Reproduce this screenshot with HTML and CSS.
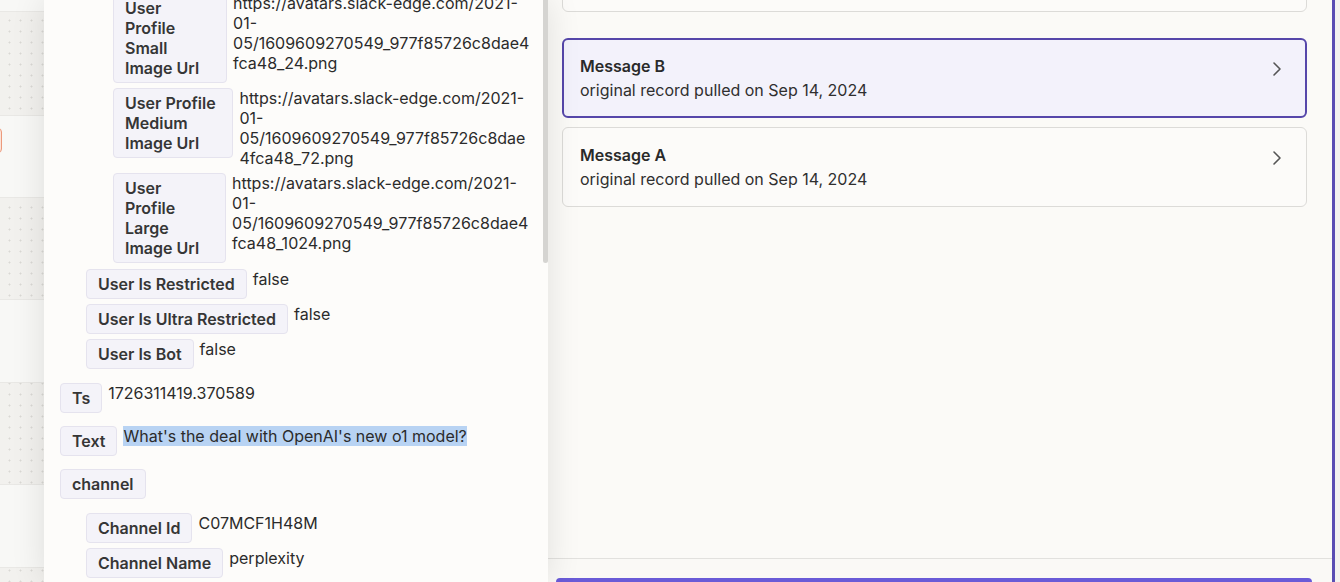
FILE: index.html
```html
<!DOCTYPE html>
<html lang="en">
<head>
<meta charset="utf-8">
<title>Record detail</title>
<link rel="stylesheet" href="styles.css">
</head>
<body>
<div class="app">
  <div class="canvas">
    <div class="node n1"></div>
    <div class="node n2"><span class="pill"></span></div>
    <div class="node n3"></div>
    <div class="node n4"></div>
  </div>

  <div class="panel">
    <div class="scroll">
      <div class="tree">
        <div class="item first">
          <div class="sub">
            <div class="item">
              <div class="sub deep">
                <div class="row"><div class="key">User Profile Small Image Url</div><div class="val">https://avatars.slack-edge.com/2021-01-05/1609609270549_977f85726c8dae4fca48_24.png</div></div>
                <div class="row"><div class="key">User Profile Medium Image Url</div><div class="val">https://avatars.slack-edge.com/2021-01-05/1609609270549_977f85726c8dae4fca48_72.png</div></div>
                <div class="row"><div class="key">User Profile Large Image Url</div><div class="val">https://avatars.slack-edge.com/2021-01-05/1609609270549_977f85726c8dae4fca48_1024.png</div></div>
              </div>
            </div>
            <div class="row"><div class="key">User Is Restricted</div><div class="val">false</div></div>
            <div class="row"><div class="key">User Is Ultra Restricted</div><div class="val">false</div></div>
            <div class="row"><div class="key">User Is Bot</div><div class="val">false</div></div>
          </div>
        </div>
        <div class="row"><div class="key">Ts</div><div class="val">1726311419.370589</div></div>
        <div class="row"><div class="key">Text</div><div class="val"><span class="sel">What's the deal with OpenAI's new o1 model?</span></div></div>
        <div class="item">
          <div class="row"><div class="key">channel</div></div>
          <div class="sub open">
            <div class="row"><div class="key">Channel Id</div><div class="val">C07MCF1H48M</div></div>
            <div class="row"><div class="key">Channel Name</div><div class="val">perplexity</div></div>
          </div>
        </div>
      </div>
    </div>
    <div class="thumb"></div>
  </div>

  <div class="right">
    <div class="list">
      <div class="card top"></div>
      <div class="card selected">
        <div class="card-text">
          <div class="card-title">Message B</div>
          <div class="card-sub">original record pulled on Sep 14, 2024</div>
        </div>
        <svg class="chev" viewBox="0 0 24 24" width="24" height="24"><path d="M9 6l6 6-6 6" fill="none" stroke="#555" stroke-width="1.6" stroke-linecap="round" stroke-linejoin="round"/></svg>
      </div>
      <div class="card">
        <div class="card-text">
          <div class="card-title">Message A</div>
          <div class="card-sub">original record pulled on Sep 14, 2024</div>
        </div>
        <svg class="chev" viewBox="0 0 24 24" width="24" height="24"><path d="M9 6l6 6-6 6" fill="none" stroke="#555" stroke-width="1.6" stroke-linecap="round" stroke-linejoin="round"/></svg>
      </div>
    </div>
    <div class="footer"><div class="btn"></div></div>
  </div>

  <div class="edge"></div>
</div>
</body>
</html>
```

FILE: styles.css
```css
* { box-sizing: border-box; }
html, body { margin: 0; padding: 0; height: 100%; }
body {
  font-family: Inter, "Noto Sans", "Liberation Sans", sans-serif;
  font-size: 16px;
  color: #2a2a2a;
  background: #f3f2ef;
  overflow: hidden;
}
.app {
  display: flex;
  width: 1340px;
  height: 582px;
  overflow: hidden;
}

/* canvas strip on the far left */
.canvas {
  position: relative;
  flex: 0 0 44px;
  height: 100%;
  background-color: #f2f1ee;
  background-image: radial-gradient(circle, #d9d8d4 0.8px, transparent 1.2px);
  background-size: 11px 11px;
  background-position: 4px 4px;
}
.node {
  position: absolute;
  left: -20px;
  width: 100px;
  background: #f8f8f6;
  border-top: 1px solid #e9e8e5;
  border-bottom: 1px solid #e9e8e5;
}
.n1 { top: -60px; height: 72px; }
.n2 { top: 115px; height: 83px; }
.n3 { top: 299px; height: 84px; }
.n4 { top: 484px; height: 84px; }
.pill {
  position: absolute;
  left: 10px;
  top: 12px;
  width: 12px;
  height: 25px;
  border: 1px solid #ec9a7c;
  background: #fbe3d8;
  border-radius: 4px;
}

/* detail panel */
.panel {
  position: relative;
  z-index: 2;
  flex: 0 0 504px;
  height: 100%;
  background: #fdfcfa;
  box-shadow: 0 0 32px rgba(0, 0, 0, 0.11);
  overflow: hidden;
}
.scroll {
  padding: 0 18px 0 16px;
  margin-top: -7px;
}
.thumb {
  position: absolute;
  right: 0;
  top: 0;
  width: 5px;
  height: 263px;
  background: #d5d4d1;
  border-radius: 0 0 3px 3px;
}
.tree {
  display: flex;
  flex-direction: column;
  gap: 13px;
}
.item {
  display: flex;
  flex-direction: column;
}
.item.first { margin-bottom: 1px; }
.sub {
  display: flex;
  flex-direction: column;
  gap: 5px;
  margin-left: 26px;
}
.sub.deep { margin-left: 27px; margin-bottom: 1px; }
.sub.open { margin-top: 14px; }
.row {
  display: flex;
  align-items: flex-start;
  gap: 6px;
}
.key {
  flex: 0 1 auto;
  padding: 4px 11px;
  line-height: 20px;
  font-weight: 600;
  color: #363636;
  background: #f4f3f9;
  border: 1px solid #e5e3ee;
  border-radius: 4px;
}
.val {
  flex: 0 1 auto;
  line-height: 20px;
  color: #2b2b2b;
  overflow-wrap: anywhere;
  min-width: 0;
}
.sel { background: #b8d3f3; }

/* right list panel */
.right {
  position: relative;
  z-index: 1;
  flex: 0 0 784px;
  height: 100%;
  display: flex;
  flex-direction: column;
  background: #fbfaf7;
}
.list {
  flex: 1 1 auto;
  padding: 0 25px 0 14px;
  display: flex;
  flex-direction: column;
  gap: 9px;
  overflow: hidden;
}
.card {
  flex: 0 0 auto;
  display: flex;
  align-items: flex-start;
  justify-content: space-between;
  padding: 15px 17px;
  border: 1px solid #dcdbd8;
  border-radius: 6px;
  background: #fcfbf9;
}
.card.top {
  height: 80px;
  margin-top: -68px;
  margin-bottom: 17px;
}
.card.selected {
  padding: 14px 16px;
  border: 2px solid #5647aa;
  background: #f3f2fb;
}
.card-title {
  font-weight: 600;
  line-height: 24px;
  color: #2a2a2a;
}
.card-sub {
  line-height: 24px;
  color: #2f2f2f;
}
.chev { flex: 0 0 auto; margin-top: 3px; }
.footer {
  flex: 0 0 24px;
  border-top: 1px solid #e2e1de;
  padding: 19px 20px 0 8px;
  background: #faf9f6;
  overflow: hidden;
}
.btn {
  height: 40px;
  background: #6a5bd7;
  border-radius: 4px 4px 0 0;
}

.edge {
  flex: 0 0 8px;
  height: 100%;
  border-left: 3px solid #5a4db3;
  background: #f3f2f0;
}
```
